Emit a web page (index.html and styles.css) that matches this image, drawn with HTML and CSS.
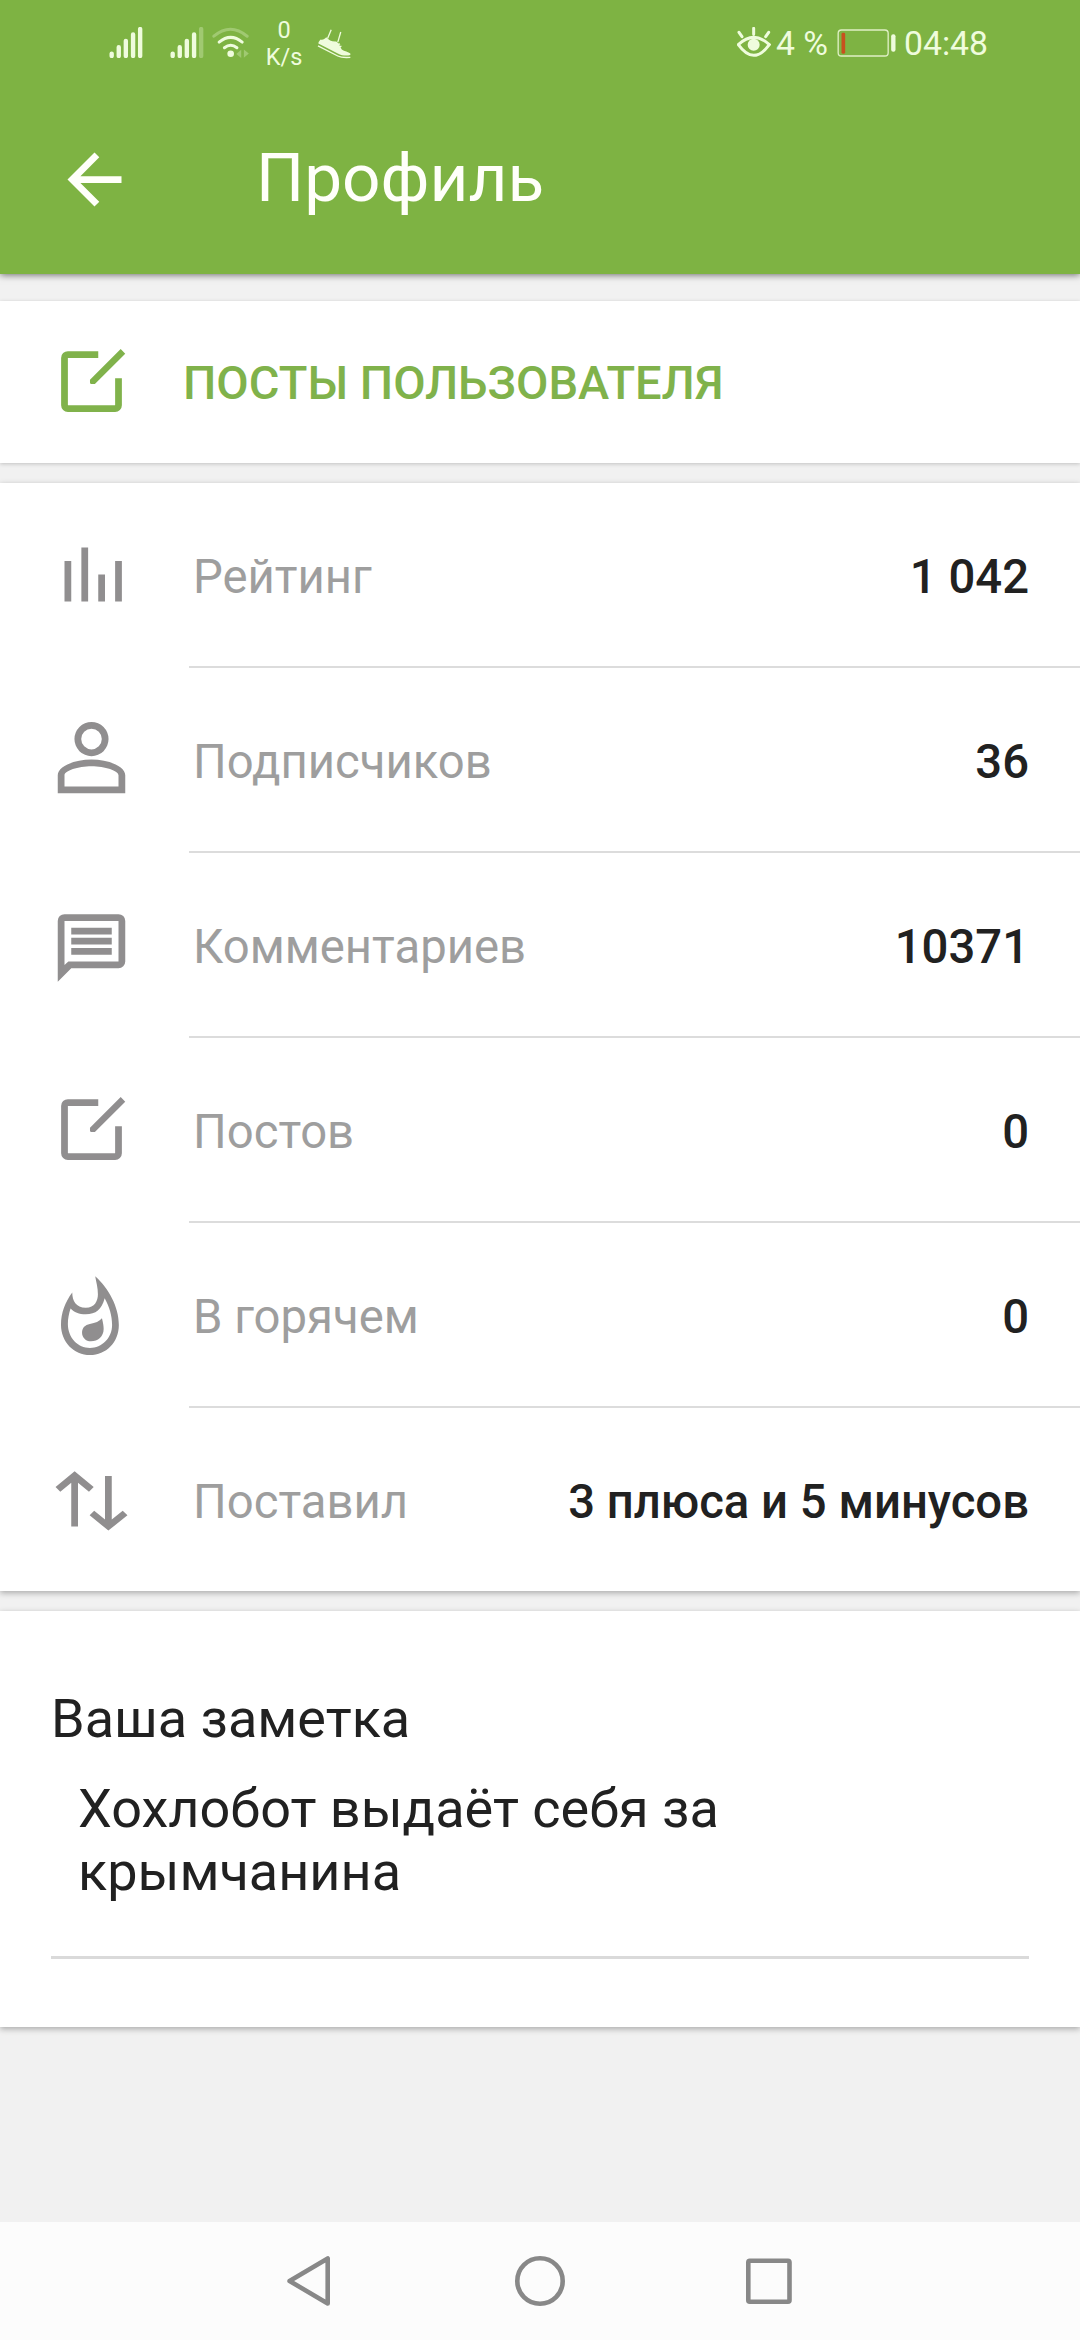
FILE: index.html
```html
<!DOCTYPE html>
<html lang="ru">
<head>
<meta charset="utf-8">
<title>Профиль</title>
<link rel="stylesheet" href="styles.css">
</head>
<body>
<svg class="defs" aria-hidden="true">
  <symbol id="edit" viewBox="0 0 24 24">
    <path d="M14 3H5a2 2 0 0 0-2 2v14a2 2 0 0 0 2 2h14a2 2 0 0 0 2-2v-8h-2v8H5V5h9z"/>
    <path d="M20.65 2.4 22 3.75l-9 9h-1a.45.45 0 0 1-.45-.45v-.8z"/>
  </symbol>
</svg>
<div class="screen">
  <header class="header">
    <div class="status">
      <div class="status-left">
        <svg class="signal" viewBox="58 80 100 92"><path d="M65.5 159v7M86.500 140v26M107.500 121v45M129 102v64M150 86v80"/></svg>
        <svg class="signal second" viewBox="241 80 100 92"><path d="M248.500 159v7M269.500 140v26M290.500 121v45M312 102v64"/><path class="dim" d="M333 86v80"/></svg>
        <svg class="wifi" viewBox="366 79 114 94">
          <path class="dim" d="M371 107Q421 65 472 107"/>
          <path d="M387 125Q422 96 457 125M403 142Q422 127 441 142"/>
          <circle cx="422" cy="160" r="10"/>
          <path class="arrows" d="M439 161l15-13v25zM477 159l-15-12v25z"/>
        </svg>
        <div class="speed"><span>0</span><span>K/s</span></div>
        <svg class="shoe" viewBox="680 80 104 94">
          <path d="M683 127c0-3 3-8 7-12 6 2 12-1 17-7 8 9 17 14 30 13l7 5 10 19c8 6 20 7 26 12v5c-12 3-25 2-38-5z"/>
          <path class="line" d="M682 134l60 31c10 5 24 5 38 4M711 112l11-27M742 123l9-31M740 131l9-3M745 138l8-3"/>
        </svg>
      </div>
      <div class="status-right">
        <svg class="eye" viewBox="50 82 102 90">
          <path class="lid" d="M54 135Q100 91 147 135Q100 199 54 135zM100 86v18M56 98l9 13M145 98l-9 13"/>
          <circle cx="100" cy="135" r="18"/>
        </svg>
        <span class="percent">4 %</span>
        <svg class="battery" viewBox="350 85 176 84">
          <rect class="case" x="353" y="88" width="150" height="78" rx="10"/>
          <rect class="charge" x="363" y="96" width="11" height="63" rx="4"/>
          <rect x="512" y="101" width="13" height="52" rx="6"/>
        </svg>
        <span class="clock">04:48</span>
      </div>
    </div>
    <div class="toolbar">
      <svg class="back" viewBox="0 0 24 24"><path d="M20 11H7.830l5.590-5.590L12 4l-8 8 8 8 1.410-1.410L7.830 13H20z"/></svg>
      <h1 class="title">Профиль</h1>
    </div>
  </header>

  <main class="content">
    <section class="card posts">
      <svg class="icon"><use href="#edit"/></svg>
      <span class="posts-label">ПОСТЫ ПОЛЬЗОВАТЕЛЯ</span>
    </section>

    <section class="card stats">
      <div class="row">
        <svg class="icon" viewBox="0 0 24 24"><path d="M4 8h2v12H4zM9 4h2v16H9zM14 12h2v8h-2zM19 8h2v12h-2z"/></svg>
        <div class="cell"><span class="label">Рейтинг</span><span class="value">1 042</span></div>
      </div>
      <div class="row">
        <svg class="icon" viewBox="0 0 24 24"><path fill-rule="evenodd" d="M12 .9a5.050 5.050 0 1 0 0 10.100A5.050 5.050 0 0 0 12 .9zm0 2a3.050 3.050 0 1 1 0 6.100 3.050 3.050 0 0 1 0-6.100zM2 22v-5.300C2 14 7 12 12 12s10 2 10 4.700V22zm2-2h16v-3.300C20 15.300 16 14 12 14s-8 1.300-8 2.700z"/></svg>
        <div class="cell"><span class="label">Подписчиков</span><span class="value">36</span></div>
      </div>
      <div class="row">
        <svg class="icon" viewBox="0 0 24 24"><path fill-rule="evenodd" d="M4 3h16a2 2 0 0 1 2 2v12a2 2 0 0 1-2 2H6l-4 4V5a2 2 0 0 1 2-2zm0 2v13.100L5.150 17H20V5z"/><path d="M6 7h12v2H6zM6 10h12v2H6zM6 13h12v2H6z"/></svg>
        <div class="cell"><span class="label">Комментариев</span><span class="value">10371</span></div>
      </div>
      <div class="row">
        <svg class="icon"><use href="#edit"/></svg>
        <div class="cell"><span class="label">Постов</span><span class="value">0</span></div>
      </div>
      <div class="row">
        <svg class="icon" viewBox="0 0 24 24"><path fill-rule="evenodd" d="M13.100.7C17 4.200 20.100 9.700 20.100 15.100 20.100 20.300 16.300 24 11.550 24S2.960 20.100 2.960 15C2.960 11.600 4.200 8.300 6.300 5.500 6.300 8 7.400 10 10.300 10 13 10 13.900 7.900 13.900 6 13.900 4.100 13.400 2.500 13.100.7zM15.900 7.200C15 10.500 13.300 11.950 10.300 11.950 8.300 11.950 6.800 11.300 5.800 10.200 5.300 11.700 5 13.200 5 14.800 5 18.900 8 21.900 11.550 21.900S18.100 18.900 18.100 15.100C18.100 12.300 17.300 9.800 15.900 7.200z"/><path d="M15.100 13.100C15.400 14.300 15.600 15.300 15.600 16.300 15.600 18.500 13.900 19.950 11.850 19.950 10.300 19.950 9.200 18.800 9.200 17.400 9.200 15.900 10.100 15.100 11.500 14.800 13.200 14.500 14.300 14 15.100 13.100z"/></svg>
        <div class="cell"><span class="label">В горячем</span><span class="value">0</span></div>
      </div>
      <div class="row">
        <svg class="icon" viewBox="0 0 24 24"><path d="M6 20V7L2.750 9.700 1.350 8.300 7 3.650l5.650 4.650-1.400 1.400L8 7v13zM16 5h2v12.900l3.250-2.600 1.400 1.400L17 21.200l-5.550-4.500 1.350-1.400 3.200 2.600z"/></svg>
        <div class="cell"><span class="label">Поставил</span><span class="value">3 плюса и 5 минусов</span></div>
      </div>
    </section>

    <section class="card note">
      <h2 class="note-title">Ваша заметка</h2>
      <p class="note-text">Хохлобот выдаёт себя за крымчанина</p>
    </section>
  </main>

  <nav class="navbar">
    <svg class="nav-icon" viewBox="0 0 60 60"><path d="M46.700 7.500v45L8.600 30z"/></svg>
    <svg class="nav-icon" viewBox="0 0 60 60"><circle cx="30" cy="30" r="22.700"/></svg>
    <svg class="nav-icon" viewBox="0 0 60 60"><rect x="9.300" y="9.700" width="41.200" height="41" rx="1.500"/></svg>
  </nav>
</div>
</body>
</html>
```
FILE: styles.css
```css
* {
  box-sizing: border-box;
}

body {
  margin: 0;
  font-family: Roboto, "Noto Sans", sans-serif;
  color: #212121;
  background: #f1f1f1;
}

.defs {
  display: none;
}

.screen {
  display: flex;
  flex-direction: column;
  width: 1080px;
  height: 2340px;
  overflow: hidden;
}

/* Header */
.header {
  height: 274px;
  background: #7eb343;
  box-shadow: 0 1px 7px rgba(0, 0, 0, .55);
}

.status {
  display: flex;
  justify-content: space-between;
  height: 86px;
  padding: 0 92px 0 109px;
  color: #effcdd;
  fill: #effcdd;
}

.status-left,
.status-right {
  display: flex;
  align-items: center;
}

.signal {
  width: 34px;
  height: 31px;
  margin-top: -2px;
  fill: none;
  stroke: #effcdd;
  stroke-width: 13;
  stroke-linecap: round;
}

.second {
  margin-left: 27px;
}

.dim {
  opacity: .3;
}

.wifi {
  width: 38px;
  height: 31px;
  margin: -2px 0 0 8px;
}

.wifi path {
  fill: none;
  stroke: #effcdd;
  stroke-width: 9;
  stroke-linecap: round;
}

.wifi .arrows {
  fill: #effcdd;
  stroke: none;
  opacity: .3;
}

.speed {
  display: flex;
  flex-direction: column;
  align-items: center;
  width: 40px;
  margin: 2px 0 0 14px;
  font-size: 23.5px;
  line-height: 27px;
}

.shoe {
  width: 35px;
  height: 31px;
  margin-left: 13px;
}

.shoe .line {
  fill: none;
  stroke: #effcdd;
  stroke-width: 4;
}

.eye {
  width: 34px;
  height: 30px;
  margin-top: -2px;
}

.eye .lid {
  fill: none;
  stroke: #effcdd;
  stroke-width: 9;
  stroke-linecap: round;
}

.percent,
.clock {
  margin-top: 2px;
  font-size: 33.75px;
  line-height: 40px;
  white-space: nowrap;
}

.percent {
  margin-left: 5px;
}

.battery {
  width: 59px;
  height: 28px;
  margin: -1px 8px 0 9px;
}

.battery .case {
  fill: none;
  stroke: #dff0c5;
  stroke-width: 4;
}

.battery .charge {
  fill: #c8501e;
}

.toolbar {
  display: flex;
  align-items: center;
  height: 187px;
  padding: 0 54px 0 54px;
}

.back {
  width: 81px;
  height: 81px;
  fill: #fffffa;
}

.title {
  margin: 0 0 3px 121px;
  font-size: 67.5px;
  font-weight: 400;
  line-height: 80px;
  color: #fffffa;
}

/* Cards */
.content {
  display: flex;
  flex: 1;
  flex-direction: column;
  padding-top: 27px;
}

.card {
  background: #fff;
  box-shadow: 0 2px 6px rgba(0, 0, 0, .3);
}

.icon {
  flex: none;
  width: 81px;
  height: 81px;
  fill: #908e8f;
}

.posts {
  display: flex;
  align-items: center;
  height: 162px;
  margin-bottom: 20px;
  padding-left: 51px;
  box-shadow: 0 1px 4px rgba(0, 0, 0, .2);
}

.posts .icon {
  margin-bottom: 1px;
  fill: #80b24b;
}

.posts-label {
  margin: 0 0 0 51px;
  font-size: 47px;
  font-weight: 500;
  color: #80b24b;
}

.stats {
  margin-bottom: 20px;
}

.row {
  display: flex;
  align-items: center;
  padding-left: 51px;
}

.cell {
  display: flex;
  flex: 1;
  align-items: center;
  justify-content: space-between;
  height: 185px;
  margin-left: 57px;
  padding: 5px 51px 0 4px;
  border-bottom: 2px solid #dcdcdc;
  font-size: 47.25px;
}

.row .icon {
  margin-bottom: 2px;
}

.row:last-child .cell {
  height: 183px;
  border-bottom: 0;
}

.row:last-child .icon {
  margin-bottom: 0;
}

.label {
  color: #9e9e9e;
}

.value {
  font-weight: 500;
}

.note {
  height: 416px;
  padding: 76px 51px 0;
}

.note-title {
  margin: 0;
  font-size: 54px;
  font-weight: 400;
  line-height: 63px;
}

.note-text {
  height: 209px;
  margin: 0;
  padding: 27px 260px 0 27px;
  border-bottom: 3px solid #dadada;
  font-size: 54px;
  line-height: 63px;
}

/* System navigation */
.navbar {
  display: flex;
  align-items: center;
  justify-content: center;
  gap: 169px;
  height: 118px;
  background: #fcfcfc;
}

.nav-icon {
  width: 60px;
  height: 60px;
  fill: none;
  stroke: #888;
  stroke-width: 4.6;
  stroke-linejoin: round;
}
```
